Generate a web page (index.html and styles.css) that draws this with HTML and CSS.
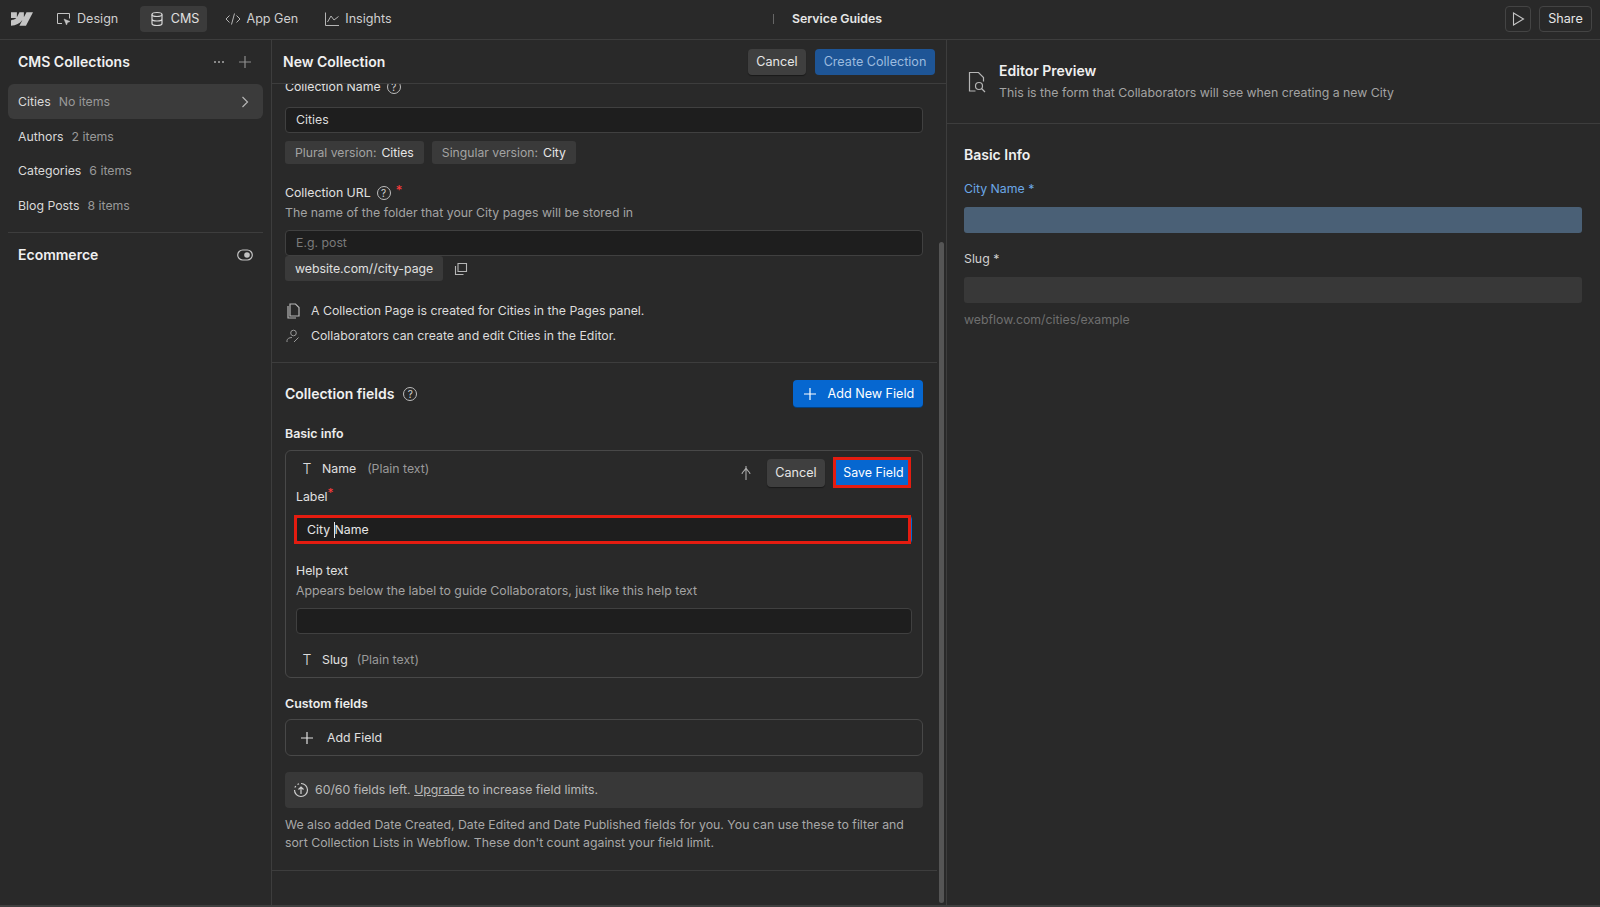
FILE: index.html
```html
<!DOCTYPE html>
<html lang="en">
<head>
<meta charset="utf-8">
<title>Service Guides - CMS</title>
<link rel="stylesheet" href="styles.css">
</head>
<body>
<div class="app">
  <header class="topbar">
    <div class="nav">
      <svg class="logo" viewBox="0 0 1080 674" width="22" height="14"><path d="M1080 0L735.400 673.700H411.700l144.200-279.200h-6.500C430.500 548.900 253 650.600 0 673.700V398.400s161.900-9.600 257-109.600H0V0h288.900v237.600h6.500L413.400 0h218.500v236.100h6.500L760.900 0z" fill="#c4c4c4"/></svg>
      <a class="nav-item design">
        <svg viewBox="0 0 16 16" width="16" height="16" class="ico"><path d="M6 12.500H1.500v-10h12v5" fill="none" stroke="#c4c4c4"/><path d="M8 8l6 2.500-2.500 1L10.500 14z" fill="#c4c4c4" stroke="#c4c4c4" stroke-width=".5"/></svg>
        Design</a>
      <a class="nav-item cms active">
        <svg viewBox="0 0 16 16" width="16" height="16" class="ico"><ellipse cx="8" cy="3.500" rx="5" ry="2" fill="none" stroke="#d8d8d8" stroke-width="1.200"/><path d="M3 3.500v9c0 1.100 2.200 2 5 2s5-.9 5-2v-9M3 8c0 1.100 2.200 2 5 2s5-.9 5-2" fill="none" stroke="#d8d8d8" stroke-width="1.200"/></svg>
        CMS</a>
      <a class="nav-item appgen">
        <svg viewBox="0 0 16 16" width="16" height="16" class="ico"><path d="M4.500 4.500L1 8l3.500 3.500M11.500 4.500L15 8l-3.500 3.500M9.500 2.500l-3 11" fill="none" stroke="#b5b5b5"/></svg>
        App Gen</a>
      <a class="nav-item insights">
        <svg viewBox="0 0 16 16" width="16" height="16" class="ico"><path d="M1.500 1.500v13h13.500M3.500 11l3.500-6 3 4 4.500-3.500" fill="none" stroke="#b5b5b5"/></svg>
        Insights</a>
    </div>
    <div class="site-title"><span class="site-sep"></span><b>Service Guides</b></div>
    <div class="top-actions">
      <button class="ghost play"><svg viewBox="0 0 16 16" width="16" height="16"><path d="M3.500 2v12L13.500 8z" fill="none" stroke="#c4c4c4" stroke-width="1.100"/></svg></button>
      <button class="ghost share">Share</button>
    </div>
  </header>

  <div class="workspace">
    <aside class="sidebar">
      <div class="side-head">
        <h2>CMS Collections</h2>
        <div class="side-tools">
          <svg viewBox="0 0 12 4" width="12" height="4"><circle cx="2" cy="2" r="1" fill="#aaa"/><circle cx="6" cy="2" r="1" fill="#aaa"/><circle cx="10" cy="2" r="1" fill="#aaa"/></svg>
          <svg viewBox="0 0 14 14" width="14" height="14"><path d="M7 1v12M1 7h12" stroke="#8e8e8e" stroke-width="1.200"/></svg>
        </div>
      </div>
      <ul class="collections">
        <li class="selected"><span class="c-name">Cities</span><span class="c-count">No items</span><svg class="chev" viewBox="0 0 8 12" width="8" height="12"><path d="M1.500 1l5 5-5 5" fill="none" stroke="#b5b5b5" stroke-width="1.200"/></svg></li>
        <li><span class="c-name">Authors</span><span class="c-count">2 items</span></li>
        <li><span class="c-name">Categories</span><span class="c-count">6 items</span></li>
        <li><span class="c-name">Blog Posts</span><span class="c-count">8 items</span></li>
      </ul>
      <div class="ecommerce">
        <h2>Ecommerce</h2>
        <svg viewBox="0 0 16 12" width="16" height="12"><rect x=".7" y="1" width="14.600" height="10" rx="5" fill="none" stroke="#c4c4c4" stroke-width="1.200"/><circle cx="10" cy="6" r="2.800" fill="#c4c4c4"/></svg>
      </div>
    </aside>

    <main class="main">
      <div class="main-head">
        <h2>New Collection</h2>
        <div class="head-btns">
          <button class="btn btn-dark head-cancel">Cancel</button>
          <button class="btn btn-muted">Create Collection</button>
        </div>
      </div>
      <div class="scroll">
        <div class="scroll-inner">
          <section class="sec-top">
            <div class="lab name-lab">Collection Name<span class="qmark">?</span></div>
            <div class="input val">Cities</div>
            <div class="chips">
              <span class="chip">Plural version:<b>Cities</b></span>
              <span class="chip">Singular version:<b>City</b></span>
            </div>
            <div class="lab url-lab">Collection URL<span class="qmark">?</span><span class="req">*</span></div>
            <p class="desc">The name of the folder that your City pages will be stored in</p>
            <div class="input ph">E.g. post</div>
            <div class="url-row">
              <span class="url-chip">website.com//city-page</span>
              <svg viewBox="0 0 14 14" width="14" height="14"><path d="M4 1.500h8.500v8H4z M1.500 4v8.500h8" fill="none" stroke="#b5b5b5" stroke-width="1.100"/></svg>
            </div>
            <div class="note note-a">
              <svg viewBox="0 0 14 16" width="14" height="16"><path d="M4 1h5.500L13 4.500V13H4z" fill="none" stroke="#b5b5b5" stroke-width="1.200"/><path d="M2 3v12h8" fill="none" stroke="#b5b5b5" stroke-width="1.200"/></svg>
              <span>A Collection Page is created for Cities in the Pages panel.</span>
            </div>
            <div class="note">
              <svg viewBox="0 0 14 14" width="14" height="14"><circle cx="7.500" cy="4" r="2.800" fill="none" stroke="#999"/><path d="M1 13v-1.500C1 10 3 8.500 6 8.500M8 13l4.500-4.500" fill="none" stroke="#999"/></svg>
              <span>Collaborators can create and edit Cities in the Editor.</span>
            </div>
          </section>

          <section class="sec-fields">
            <div class="fields-head">
              <div class="fields-title"><h3>Collection fields</h3><span class="qmark">?</span></div>
              <button class="btn btn-blue add-new"><svg viewBox="0 0 14 14" width="14" height="14"><path d="M7 1v12M1 7h12" stroke="#fff" stroke-width="1.200"/></svg>Add New Field</button>
            </div>
            <h4>Basic info</h4>
            <div class="field-box">
              <div class="field-top">
                <div class="field-id name-id"><span class="t-ico">T</span><span class="f-name">Name</span><span class="f-type">(Plain text)</span></div>
                <div class="field-acts">
                  <svg class="split" viewBox="0 0 10 16" width="10" height="16"><path d="M5 1v14M1 9C1 6.500 4 6 5 3c1 3 4 3.500 4 6" fill="none" stroke="#aaa" stroke-width="1.100"/></svg>
                  <button class="btn btn-dark cancel2">Cancel</button>
                  <button class="btn btn-blue save">Save Field</button>
                </div>
              </div>
              <div class="lab label-lab">Label<span class="req small">*</span></div>
              <div class="input focus">City <i class="caret"></i>Name</div>
              <div class="lab help-lab">Help text</div>
              <p class="desc">Appears below the label to guide Collaborators, just like this help text</p>
              <div class="input help-input"></div>
              <div class="field-id slug"><span class="t-ico">T</span><span class="f-name">Slug</span><span class="f-type">(Plain text)</span></div>
            </div>
            <h4 class="custom">Custom fields</h4>
            <div class="add-field"><svg viewBox="0 0 14 14" width="14" height="14"><path d="M7 1v12M1 7h12" stroke="#e0e0e0" stroke-width="1.200"/></svg>Add Field</div>
            <div class="limit">
              <svg viewBox="0 0 16 16" width="16" height="16"><path d="M8 1.500a6.500 6.500 0 1 1 0 13a6.500 6.500 0 0 1-6.500-6.500" fill="none" stroke="#cfcfcf" stroke-width="1.200"/><path d="M1.800 5.500l1-1.500M4.500 2.500L6 1.800" stroke="#cfcfcf" stroke-width="1.200"/><path d="M8 12V5M5.500 7.500L8 5l2.500 2.500" fill="none" stroke="#cfcfcf" stroke-width="1.200"/></svg>
              <span>60/60 fields left. <u>Upgrade</u> to increase field limits.</span>
            </div>
            <p class="also">We also added Date Created, Date Edited and Date Published fields for you. You can use these to filter and sort Collection Lists in Webflow. These don't count against your field limit.</p>
          </section>
        </div>
        <div class="scrollbar"></div>
      </div>
    </main>

    <aside class="preview">
      <div class="prev-head">
        <svg viewBox="0 0 18 22" width="18" height="22"><path d="M7.500 20H1.500V1.500h9l5 5v4" fill="none" stroke="#b5b5b5" stroke-width="1.200"/><circle cx="11" cy="15" r="3.500" fill="none" stroke="#b5b5b5" stroke-width="1.200"/><path d="M13.500 17.500L17 21" stroke="#b5b5b5" stroke-width="1.200"/></svg>
        <div><h3>Editor Preview</h3><p>This is the form that Collaborators will see when creating a new City</p></div>
      </div>
      <div class="prev-body">
        <h3>Basic Info</h3>
        <div class="p-label active-label">City Name *</div>
        <div class="p-input blue"></div>
        <div class="p-label">Slug *</div>
        <div class="p-input"></div>
        <div class="p-url">webflow.com/cities/example</div>
      </div>
    </aside>
  </div>
</div>
</body>
</html>
```

FILE: styles.css
```css
* { box-sizing: border-box; }
html, body { margin: 0; height: 100%; }
body {
  background: #292929;
  color: #e6e6e6;
  font-family: Inter, "Liberation Sans", sans-serif;
  font-size: 12.3px;
  line-height: 18px;
  overflow: hidden;
}
h2, h3, h4, p, ul { margin: 0; padding: 0; }
ul { list-style: none; }
button { font: inherit; cursor: pointer; }

.app { height: 907px; display: grid; grid-template-rows: 40px 1fr; border-bottom: 2px solid #3f3f3f; }

.topbar {
  display: grid;
  grid-template-columns: 762px auto 1fr;
  align-items: center;
  border-bottom: 1px solid #3d3d3d;
  padding: 0 8px 2px 11px;
}
.nav { display: flex; align-items: center; font-size: 12.6px; }
.logo { margin-right: 14px; }
.nav-item {
  display: flex; align-items: center; gap: 5px;
  height: 26px; padding: 0 8px 0 9px; border-radius: 4px;
  color: #cfcfcf; white-space: nowrap;
}
.nav-item.active { background: #3b3b3b; color: #e0e0e0; margin: 0 9px 0 14px; gap: 5.5px; }
.nav-item.insights { margin-left: 9px; }
.ico { flex: none; }
.site-title { display: flex; align-items: center; gap: 18px; }
.site-sep { width: 1px; height: 10px; background: #666; }
.site-title b { font-weight: 600; color: #e6e6e6; }
.top-actions { display: flex; justify-content: flex-end; gap: 8px; }
.ghost {
  height: 26px; background: transparent; color: #e6e6e6;
  border: 1px solid #444; border-radius: 4px;
  display: flex; align-items: center; justify-content: center;
}
.play { width: 26px; padding: 0; }
.share { width: 53px; padding: 0; font-size: 12.6px; }

.workspace { display: grid; grid-template-columns: 272px 675px 1fr; min-height: 0; }

.sidebar { padding: 0 8px; border-right: 1px solid #3d3d3d; }
.side-head {
  height: 44px; display: flex; align-items: center; justify-content: space-between;
  padding: 0 11px 0 10px;
}
.side-head h2, .ecommerce h2 { font-size: 14px; font-weight: 600; color: #f0f0f0; }
.side-tools { display: flex; align-items: center; gap: 13px; }
.collections li {
  height: 34.700px; display: flex; align-items: center; gap: 8px; padding: 1px 9px 0 10px; border-radius: 6px;
}
.collections li.selected { background: #3b3b3b; }
.c-name { color: #d9d9d9; }
.c-count { color: #999; }
.chev { margin-left: auto; margin-right: 5px; }
.ecommerce {
  margin-top: 9px; border-top: 1px solid #3d3d3d; height: 45px;
  display: flex; align-items: center; justify-content: space-between; padding: 0 10px;
}

.main { min-height: 0; display: flex; flex-direction: column; border-right: 1px solid #3d3d3d; }
.main-head {
  height: 44px; flex: none; display: flex; align-items: center; justify-content: space-between;
  padding: 0 11px 0 11px; border-bottom: 1px solid #3d3d3d;
  background: #292929; position: relative; z-index: 1;
}
.main-head h2 { font-size: 14px; font-weight: 600; color: #f0f0f0; }
.head-btns { display: flex; gap: 9px; }
.btn {
  height: 26px; border: 0; border-radius: 4px; padding: 0 9px; white-space: nowrap;
  display: inline-flex; align-items: center; font-size: 12.6px;
}
.btn-dark { background: #3f3f3f; color: #e6e6e6; box-shadow: 0 1px 1px rgba(0,0,0,.4); justify-content: center; padding: 0; }
.head-cancel { width: 58px; }
.btn-muted { background: #1e5596; color: #9cbbdf; width: 120px; justify-content: center; padding: 0; }
.btn-blue { background: #0667d0; color: #fff; box-shadow: 0 1px 0 #03407f; }

.scroll { position: relative; flex: 1; min-height: 0; overflow: hidden; }
.scroll-inner { margin-top: -6px; }
.scrollbar {
  position: absolute; right: 2px; top: 158px; bottom: 2px; width: 5px;
  background: #555; border-radius: 3px;
}

.sec-top { padding: 0 14px 17px 13px; border-bottom: 1px solid #3d3d3d; margin-right: 9px; }
.lab { color: #e0e0e0; }
.name-lab { display: flex; align-items: center; height: 18px; margin-bottom: 11px; }
.input {
  height: 26px; background: #1e1e1e; border: 1px solid #404040; border-radius: 4px;
  padding: 0 10px; display: flex; align-items: center;
}
.val { color: #dcdcdc; }
.ph { color: #7a7a7a; }
.chips { display: flex; gap: 8px; margin-top: 8px; font-size: 12.2px; }
.chip { height: 23px; background: #3a3a3a; border-radius: 3px; padding: 0 10px; display: flex; align-items: center; gap: 5px; color: #a3a3a3; }
.chip b { font-weight: 400; color: #e6e6e6; }
.url-lab { display: flex; align-items: center; margin-top: 20px; }
.qmark {
  width: 14px; height: 14px; border: 1px solid #bdbdbd; border-radius: 50%;
  display: inline-flex; align-items: center; justify-content: center;
  font-size: 10px; line-height: 1; color: #d0d0d0; margin-left: 6px; flex: none;
}
.fields-title .qmark { margin-left: 9px; }
.req { color: #ff3b3b; margin-left: 5px; align-self: flex-start; line-height: 12px; font-size: 13px; }
.desc { color: #a3a3a3; margin-top: 2px; }
.url-lab + .desc { margin-bottom: 8px; }
.url-row { display: flex; align-items: center; gap: 11px; }
.url-chip { height: 25px; background: #3a3a3a; border-radius: 3px; padding: 0 10px; display: flex; align-items: center; color: #e0e0e0; }
.note { display: flex; align-items: center; gap: 11px; height: 18px; margin-top: 7px; padding-left: 1px; color: #dcdcdc; }
.note svg { flex: none; }
.note-a { margin-top: 21px; }

.sec-fields { padding: 17px 14px 18px 13px; margin-right: 9px; border-bottom: 1px solid #3d3d3d; }
.fields-head { display: flex; align-items: center; justify-content: space-between; }
.fields-title { display: flex; align-items: center; }
.fields-title h3 { font-size: 14px; font-weight: 600; color: #f0f0f0; }
.add-new { gap: 10.500px; padding: 0 0 0 10px; width: 130px; height: 27px; }
h4 { font-size: 12.4px; font-weight: 600; color: #ededed; }
.sec-fields > h4 { margin-top: 18px; }
.field-box {
  margin-top: 7px; border: 1px solid #484848; border-radius: 6px;
  padding: 7px 10px 9px 10px; height: 228px;
}
.field-top { display: flex; align-items: flex-start; justify-content: space-between; height: 29px; }
.field-id { display: flex; align-items: center; height: 20px; }
.name-id { margin-top: 1px; }
.t-ico { width: 10px; margin-left: 6px; margin-right: 10px; color: #dcdcdc; font-size: 14px; font-weight: 300; text-align: center; }
.f-name { color: #e0e0e0; margin-right: 11px; }
.slug .f-name { margin-right: 9px; }
.f-type { color: #999; }
.field-acts { display: flex; align-items: center; margin-top: -1px; margin-right: 1px; }
.split { margin-right: 16px; }
.cancel2 { height: 28px; width: 58px; }
.save { height: 31px; width: 78px; margin-left: 8px; padding: 0 0 0 3px; font-size: 12.4px; justify-content: center; border: 3px solid #e41c10; border-radius: 0; box-shadow: none; }
.req.small { margin-left: 0; font-size: 12px; vertical-align: 4px; }
.focus { height: 29px; margin-top: 9px; border-color: #0667d0; color: #e6e6e6; white-space: pre; position: relative; }
.focus::after { content: ""; position: absolute; top: -1px; bottom: -1px; left: -3px; right: 0; border: 3px solid #e41c10; }
.caret { display: inline-block; width: 1px; height: 16px; background: #e6e6e6; }
.help-lab { margin-top: 18px; }
.help-input { margin-top: 8px; }
.slug { margin-top: 16px; }
.sec-fields > h4.custom { margin-top: 17px; }
.add-field {
  margin-top: 6px; height: 37px; border: 1px solid #484848; border-radius: 6px;
  display: flex; align-items: center; gap: 13px; padding: 0 14px; color: #e0e0e0;
}
.limit {
  margin-top: 16px; height: 36px; background: #383838; border-radius: 4px;
  display: flex; align-items: center; gap: 6px; padding: 0 8px; color: #b8b8b8;
}
.limit svg { flex: none; }
.also { margin-top: 8px; color: #a8a8a8; }

.preview { min-width: 0; }
.prev-head {
  height: 84px; display: flex; align-items: center; gap: 13px; padding: 0 20px 0 21px;
  border-bottom: 1px solid #3d3d3d;
}
.prev-head h3 { font-size: 14px; font-weight: 600; color: #f0f0f0; margin-bottom: 4px; }
.prev-head p { color: #a3a3a3; }
.prev-body { padding: 22px 18px 0 17px; }
.prev-body h3 { font-size: 14px; font-weight: 600; color: #f0f0f0; }
.p-label { color: #d0d0d0; margin-top: 17px; }
.active-label { color: #6ba7e6; margin-top: 16px; }
.p-input { height: 26px; background: #383838; border-radius: 3px; margin-top: 9px; }
.p-input.blue { background: #4a6076; }
.p-input + .p-label { margin-top: 17px; }
.p-url { color: #6f6f6f; margin-top: 8px; }
```
